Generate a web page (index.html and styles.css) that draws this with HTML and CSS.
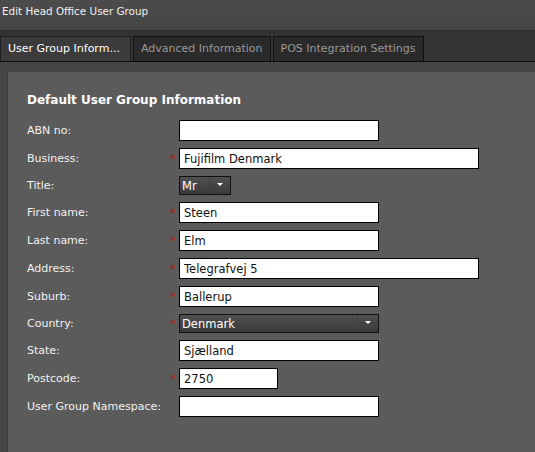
FILE: index.html
```html
<!DOCTYPE html>
<html>
<head>
  <title>Edit Head Office User Group</title>
  <link rel="stylesheet" href="styles.css">
</head>
<body>
    <div class="title-bar">Edit Head Office User Group</div>

    <div class="tab-bar">
        <div class="tab active">User Group Inform...</div>
        <div class="tab">Advanced Information</div>
        <div class="tab">POS Integration Settings</div>
    </div>

    <div class="content">
        <form class="panel" action="#">
            <div class="panel-title">Default User Group Information</div>

            <div class="row">
                <label>ABN no:</label>
                <span class="req"></span>
                <input type="text" class="w200" value="">
            </div>
            <div class="row">
                <label>Business:</label>
                <span class="req">*</span>
                <input type="text" class="w300" value="Fujifilm Denmark">
            </div>
            <div class="row">
                <label>Title:</label>
                <span class="req"></span>
                <div class="select w52"><span>Mr</span><i></i></div>
            </div>
            <div class="row">
                <label>First name:</label>
                <span class="req">*</span>
                <input type="text" class="w200" value="Steen">
            </div>
            <div class="row">
                <label>Last name:</label>
                <span class="req">*</span>
                <input type="text" class="w200" value="Elm">
            </div>
            <div class="row">
                <label>Address:</label>
                <span class="req">*</span>
                <input type="text" class="w300" value="Telegrafvej 5">
            </div>
            <div class="row">
                <label>Suburb:</label>
                <span class="req">*</span>
                <input type="text" class="w200" value="Ballerup">
            </div>
            <div class="row">
                <label>Country:</label>
                <span class="req">*</span>
                <div class="select w200"><span>Denmark</span><i></i></div>
            </div>
            <div class="row">
                <label>State:</label>
                <span class="req"></span>
                <input type="text" class="w200" value="Sjælland">
            </div>
            <div class="row">
                <label>Postcode:</label>
                <span class="req">*</span>
                <input type="text" class="w99" value="2750">
            </div>
            <div class="row">
                <label>User Group Namespace:</label>
                <span class="req"></span>
                <input type="text" class="w200" value="">
            </div>
        </form>
    </div>
</body>
</html>
```

FILE: styles.css
```css
body {
    margin: 0;
    padding: 0;
    background-color: #454545;
    color: #fff;
    font-family: 'DejaVu Sans', Verdana, sans-serif;
    font-size: 10.5px;
    height: 452px;
    overflow: hidden;
    display: flex;
    flex-direction: column;
}

.title-bar {
    height: 31px;
    background: linear-gradient(#4c4c4c, #444);
    border-bottom: 1px solid #2e2e2e;
    padding: 5px 0 0 2px;
    box-sizing: border-box;
    font-size: 10.4px;
    color: #f0f0f0;
}

.tab-bar {
    height: 31px;
    background-color: #333;
    border-bottom: 1px solid #0e0e0e;
    display: flex;
    align-items: flex-end;
    gap: 2px;
    box-sizing: border-box;
}

.tab {
    height: 25px;
    line-height: 24px;
    padding: 0 7px;
    box-sizing: border-box;
    background-color: #2a2a2a;
    border: 1px solid #111;
    border-bottom: none;
    color: #9a9a9a;
    font-size: 11px;
    white-space: nowrap;
}

.tab.active {
    background-color: #3b3b3b;
    color: #fff;
    width: 131px;
    border-color: #1e1e1e;
}

.content {
    flex: 1;
    padding-top: 10px;
    display: flex;
}

.panel {
    flex: 1;
    margin-left: 7px;
    background-color: #5b5b5b;
    border-left: 1px solid #3c3c3c;
    padding: 21px 0 0 19px;
}

.panel-title {
    font-weight: bold;
    font-size: 12px;
    margin-bottom: 13px;
}

.row {
    display: flex;
    align-items: center;
    margin-bottom: 7px;
}

.row label {
    width: 143px;
    color: #f2f2f2;
    font-size: 11px;
}

.req {
    width: 9px;
    color: #b02020;
    font-size: 12px;
    line-height: 10px;
}

.row input {
    height: 21px;
    box-sizing: border-box;
    border: 1px solid #000;
    background: #fff;
    font-family: 'DejaVu Sans', Verdana, sans-serif;
    font-size: 11.5px;
    color: #111;
    padding: 0 4px;
    margin: 0;
    outline: none;
}

.w200 { width: 200px; }
.w300 { width: 300px; }
.w99 { width: 99px; }
.w52 { width: 52px; }

.select {
    height: 19px;
    box-sizing: border-box;
    border: 1px solid #111;
    background: linear-gradient(#505050, #3a3a3a);
    display: flex;
    align-items: center;
    font-size: 11.5px;
    color: #fff;
}

.select span {
    flex: 1;
    padding-left: 2px;
}

.select i {
    width: 20px;
    height: 100%;
    border-left: 1px solid #3f3f3f;
    position: relative;
}

.select i:after {
    content: "";
    position: absolute;
    left: 7px;
    top: 6px;
    border-left: 3px solid transparent;
    border-right: 3px solid transparent;
    border-top: 3px solid #fff;
}
```
